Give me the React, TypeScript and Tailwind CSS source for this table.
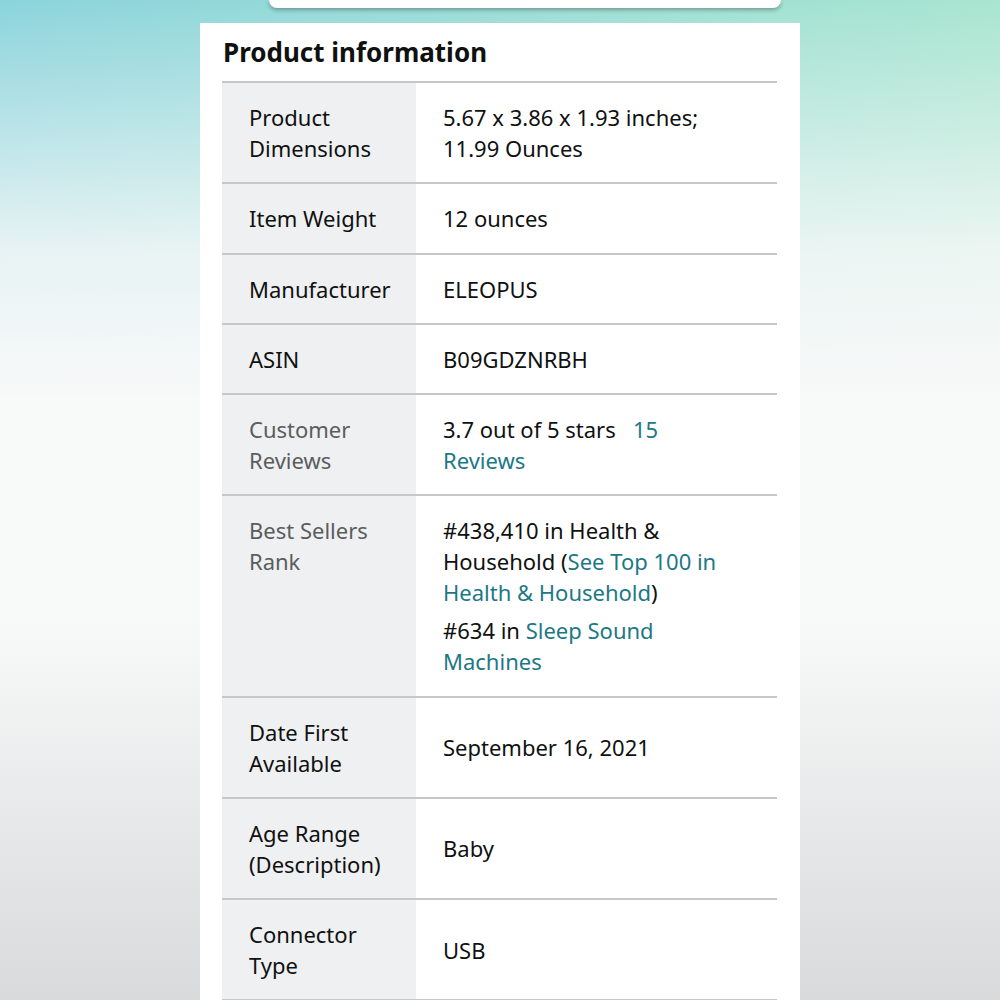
import React from "react";

type Row = {
  label: string[];
  muted?: boolean;
  top?: boolean;
  value: React.ReactNode;
};

const link = "text-[#1d7886]";

const rows: Row[] = [
  { label: ["Product", "Dimensions"], value: <><div>5.67 x 3.86 x 1.93 inches;</div><div>11.99 Ounces</div></> },
  { label: ["Item Weight"], value: <div>12 ounces</div> },
  { label: ["Manufacturer"], value: <div>ELEOPUS</div> },
  { label: ["ASIN"], value: <div>B09GDZNRBH</div> },
  {
    label: ["Customer", "Reviews"],
    muted: true,
    value: (
      <>
        <div>
          3.7 out of 5 stars&nbsp;&nbsp; <span className={link}>15</span>
        </div>
        <div className={link}>Reviews</div>
      </>
    ),
  },
  {
    label: ["Best Sellers", "Rank"],
    muted: true,
    top: true,
    value: (
      <div className="flex flex-col gap-[7px]">
        <div>
          <div>#438,410 in Health &amp;</div>
          <div>
            Household (<span className={link}>See Top 100 in</span>
          </div>
          <div>
            <span className={link}>Health &amp; Household</span>)
          </div>
        </div>
        <div>
          <div>
            #634 in <span className={link}>Sleep Sound</span>
          </div>
          <div className={link}>Machines</div>
        </div>
      </div>
    ),
  },
  { label: ["Date First", "Available"], value: <div>September 16, 2021</div> },
  { label: ["Age Range", "(Description)"], value: <div>Baby</div> },
  { label: ["Connector", "Type"], value: <div>USB</div> },
];

export default function App() {
  return (
    <div
      className="w-[1000px] h-[1000px] overflow-hidden flex justify-center bg-[linear-gradient(to_bottom,rgba(216,218,219,0)_62%,#d8dadb_100%),linear-gradient(to_bottom,rgba(247,248,248,0)_0%,rgba(247,248,248,0.85)_25%,#f8f9f9_40%),linear-gradient(to_right,#8bd4dc,#a8e5d0)]"
      style={{ fontFamily: '"Noto Sans", "Open Sans", sans-serif' }}
    >
      <div className="w-[600px] flex flex-col">
        <div className="h-[23px] shrink-0 pl-[69px] pr-[19px]">
          <div className="h-[8px] bg-white rounded-b-[10px] shadow-[0_2px_4px_rgba(0,0,0,0.3)]" />
        </div>
        <div className="flex-1 bg-white pl-[22px] pr-[23px]">
          <h2 className="text-[26px] font-bold text-[#0f1111] leading-[36px] pt-[11px] pl-[1px] h-[58px]">
            Product information
          </h2>
          <div className="border-t-2 border-[#c6c8c8] text-[22px] leading-[31px] text-[#0f1111]">
            {rows.map((r, i) => (
              <div key={i} className="flex items-stretch border-b-2 border-[#c6c8c8]">
                <div
                  className={`w-[194px] shrink-0 bg-[#eff0f1] pl-[27px] pt-[19px] pb-[18.25px] flex flex-col ${
                    r.top ? "justify-start" : "justify-center"
                  } ${r.muted ? "text-[#5a5d5d]" : "text-[#0f1111]"}`}
                >
                  {r.label.map((l, j) => (
                    <div key={j}>{l}</div>
                  ))}
                </div>
                <div className="flex-1 pl-[27px] pt-[19px] pb-[18.25px] flex flex-col justify-center">
                  {r.value}
                </div>
              </div>
            ))}
          </div>
        </div>
      </div>
    </div>
  );
}
